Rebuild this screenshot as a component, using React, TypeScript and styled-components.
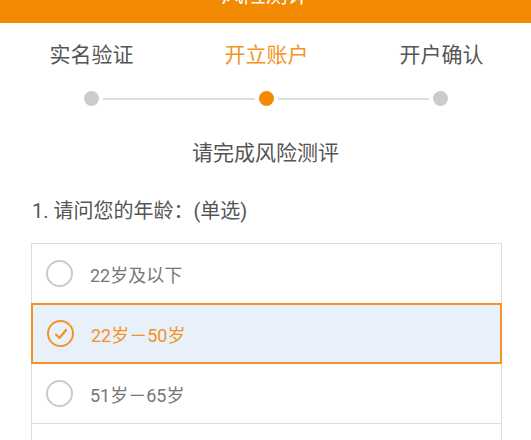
import React, { useState } from "react";
import styled, { createGlobalStyle } from "styled-components";

const colors = {
  orange: "#f28a03",
  orangeText: "#f39326",
  text: "#555555",
  muted: "#777777",
  line: "#dddddd",
  dot: "#cccccc",
  selectedBg: "#e8f0fa"
};

const GlobalStyle = createGlobalStyle`
  body {
    margin: 0;
    background: #ffffff;
    font-family: Roboto, "Noto Sans CJK SC", sans-serif;
    overflow: hidden;
  }
`;

const steps = ["实名验证", "开立账户", "开户确认"];
const options = ["22岁及以下", "22岁－50岁", "51岁－65岁", "66岁以上"];

const Page = styled.div`
  width: 531px;
  height: 440px;
  overflow: hidden;
`;

const Header = styled.header`
  height: 56px;
  margin-top: -33px;
  background: ${colors.orange};
  display: flex;
  align-items: center;
  justify-content: center;
  position: relative;
`;

const Title = styled.h1`
  margin: -7px 0 0;
  color: #ffffff;
  font-size: 22px;
  font-weight: 400;
`;

const HeaderIcon = styled.svg`
  position: absolute;
  right: 18px;
  top: 12px;
`;

const StepLabels = styled.div`
  display: grid;
  grid-template-columns: repeat(3, 175px);
  padding: 20px 0 0 4px;
`;

const StepLabel = styled.div<{ $active?: boolean }>`
  text-align: center;
  font-size: 21px;
  line-height: 24px;
  color: ${(p) => (p.$active ? colors.orangeText : colors.text)};
`;

const Track = styled.div`
  display: flex;
  align-items: center;
  padding: 24px 83px 0 84px;
`;

const Dot = styled.span<{ $active?: boolean }>`
  width: 15px;
  height: 15px;
  border-radius: 50%;
  flex: none;
  background: ${(p) => (p.$active ? colors.orange : colors.dot)};
`;

const TrackLine = styled.span`
  flex: 1;
  height: 2px;
  margin: 0 4px;
  background: ${colors.line};
`;

const Subtitle = styled.h2`
  margin: 34px 0 0;
  text-align: center;
  font-size: 21px;
  font-weight: 400;
  line-height: 26px;
  color: ${colors.text};
`;

const Question = styled.p`
  margin: 32px 0 0 32px;
  font-size: 20px;
  line-height: 26px;
  color: ${colors.text};
`;

const OptionList = styled.div`
  margin: 20px 29px 0 31px;
  display: flex;
  flex-direction: column;
`;

const Option = styled.div<{ $selected?: boolean }>`
  position: relative;
  z-index: ${(p) => (p.$selected ? 1 : 0)};
  height: 61px;
  margin-top: -1px;
  box-sizing: border-box;
  display: flex;
  align-items: center;
  gap: 17px;
  padding-left: 14px;
  border: ${(p) =>
    p.$selected ? `2px solid ${colors.orangeText}` : `1px solid ${colors.line}`};
  background: ${(p) => (p.$selected ? colors.selectedBg : "#ffffff")};
  color: ${(p) => (p.$selected ? colors.orangeText : colors.muted)};
  font-size: 18px;
  cursor: pointer;
`;

const Radio = styled.span<{ $selected?: boolean }>`
  width: 27px;
  height: 27px;
  box-sizing: border-box;
  border-radius: 50%;
  border: 2px solid ${(p) => (p.$selected ? colors.orangeText : "#cacaca")};
  display: flex;
  align-items: center;
  justify-content: center;
  flex: none;
`;

export default function App() {
  const [selected, setSelected] = useState(1);

  return (
    <Page>
      <GlobalStyle />
      <Header>
        <Title>风险测评</Title>
        <HeaderIcon width="26" height="26" viewBox="0 0 26 26" fill="none">
          <path
            d="M3 16 Q10 22 18 18 L24 14"
            stroke="#ffffff"
            strokeWidth="2.2"
            strokeLinecap="round"
          />
          <path d="M15 12 L21 6" stroke="#ffffff" strokeWidth="2.2" strokeLinecap="round" />
        </HeaderIcon>
      </Header>

      <StepLabels>
        {steps.map((s, i) => (
          <StepLabel key={s} $active={i === 1}>
            {s}
          </StepLabel>
        ))}
      </StepLabels>
      <Track>
        <Dot />
        <TrackLine />
        <Dot $active />
        <TrackLine />
        <Dot />
      </Track>

      <Subtitle>请完成风险测评</Subtitle>
      <Question>1. 请问您的年龄：(单选)</Question>

      <OptionList>
        {options.map((o, i) => (
          <Option key={o} $selected={i === selected} onClick={() => setSelected(i)}>
            <Radio $selected={i === selected}>
              {i === selected && (
                <svg width="14" height="12" viewBox="0 0 14 12" fill="none">
                  <path
                    d="M2 6.5 L5.5 10 L12 2"
                    stroke={colors.orangeText}
                    strokeWidth="2.2"
                    strokeLinecap="round"
                    strokeLinejoin="round"
                  />
                </svg>
              )}
            </Radio>
            {o}
          </Option>
        ))}
      </OptionList>
    </Page>
  );
}
